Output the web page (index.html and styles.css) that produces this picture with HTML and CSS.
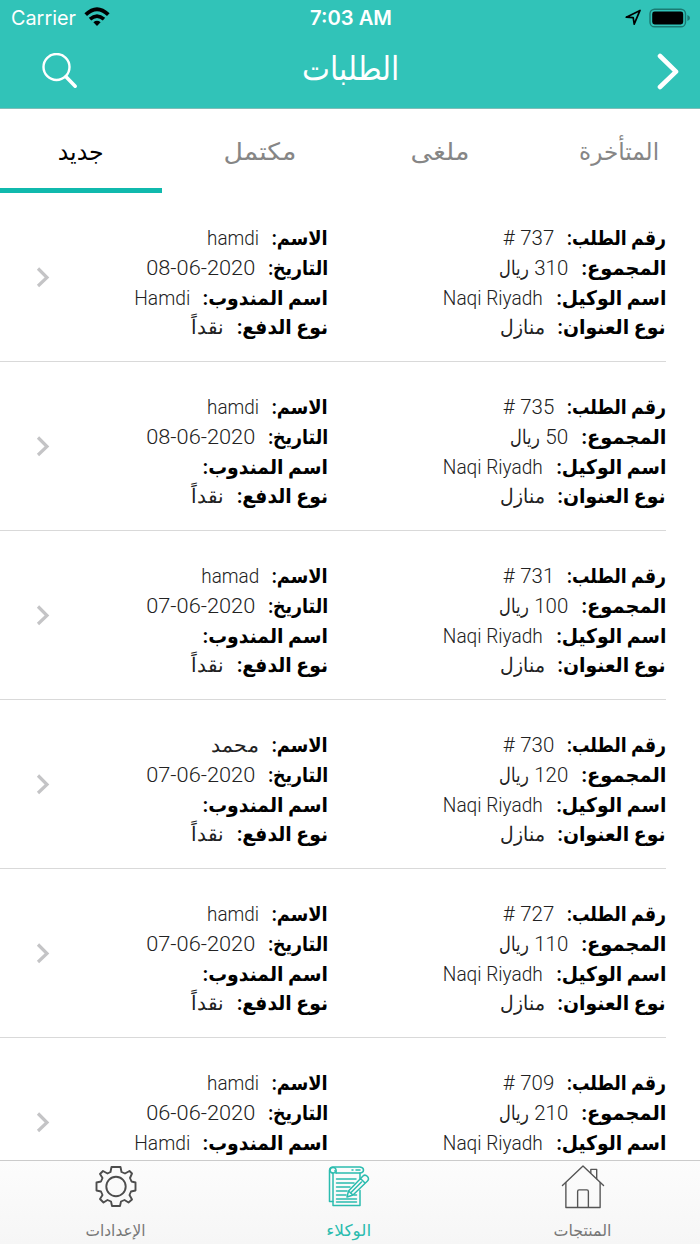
FILE: index.html
```html
<!DOCTYPE html>
<html lang="ar" dir="rtl">
<head>
  <meta charset="UTF-8" />
  <meta name="viewport" content="width=device-width, initial-scale=1.0"/>
  <title>الطلبات</title>
  <link rel="stylesheet" href="styles.css">
</head>
<body>
  <div class="app">

    <!-- Header -->
    <header class="header">
      <div class="status" dir="ltr">
        <div class="status-side">
          <span class="carrier"><span class="fit" data-width="65">Carrier</span></span>
          <svg class="wifi" width="26" height="20" viewBox="0 0 26 20">
            <path d="M1.7 7.6Q13-3.2 24.3 7.6" fill="none" stroke="#000" stroke-width="3.8"/>
            <path d="M6 12.2Q13 6 20 12.2" fill="none" stroke="#000" stroke-width="3.6"/>
            <path d="M9.4 15.2Q13 12.4 16.6 15.2L13 19Z"/>
          </svg>
        </div>
        <span class="time"><span class="fit" data-width="82">7:03 AM</span></span>
        <div class="status-side end">
          <svg width="17" height="17" viewBox="0 0 17 17">
            <path d="M1.3 8.2L15 1.4L9.2 15.2L8.2 8.7Z" fill="none" stroke="#000" stroke-width="1.7" stroke-linejoin="round"/>
          </svg>
          <svg width="41" height="20" viewBox="0 0 41 20">
            <rect x="1" y="1.2" width="35.5" height="17.6" rx="4.6" fill="none" stroke="#1a7a72" stroke-width="1.4"/>
            <rect x="3.2" y="3.6" width="31" height="12.8" rx="2.4"/>
            <path d="M38.4 7Q41 8 41 10T38.4 13Z" fill="#1a7a72"/>
          </svg>
        </div>
      </div>
      <div class="nav" dir="ltr">
        <div class="nav-side">
          <svg width="36" height="37" viewBox="0 0 36 37" fill="none" stroke="#fff" stroke-linecap="round">
            <circle cx="14.5" cy="14" r="13" stroke-width="2.4"/>
            <path d="M24 23.8L33.2 33.2" stroke-width="3.6"/>
          </svg>
        </div>
        <h1 class="title" dir="rtl"><span class="fit" data-width="97">الطلبات</span></h1>
        <div class="nav-side end">
          <svg width="22" height="37" viewBox="0 0 22 37">
            <path d="M3 3L19 18.700L3 34" fill="none" stroke="#fff" stroke-width="4.600" stroke-linecap="round" stroke-linejoin="round"/>
          </svg>
        </div>
      </div>
    </header>

    <!-- Tabs -->
    <nav class="tabs">
      <a class="tab"><span class="fit" data-width="80">المتأخرة</span></a>
      <a class="tab"><span class="fit" data-width="59">ملغى</span></a>
      <a class="tab"><span class="fit" data-width="73">مكتمل</span></a>
      <a class="tab active"><span class="fit" data-width="46">جديد</span></a>
    </nav>

    <!-- Orders -->
    <main class="orders" id="orders"></main>

    <!-- Bottom bar -->
    <footer class="tabbar">
      <a class="tabbar-item">
        <svg width="46" height="46" viewBox="0 0 46 46" fill="none" stroke="#555" stroke-width="1.4" stroke-linecap="round" stroke-linejoin="round">
          <path d="M2 22L23 2L44 22"/>
          <path d="M5.5 19V44.5H40.5V19"/>
          <path d="M31 9V5.5H37V15"/>
          <path d="M17.5 44V28Q17.5 26.5 19 26.5H27Q28.5 26.5 28.5 28V44"/>
        </svg>
        <span class="tabbar-label"><span class="fit" data-width="58">المنتجات</span></span>
      </a>
      <a class="tabbar-item active">
        <svg width="42" height="42" viewBox="0 0 42 42" fill="none" stroke="#2bbcaf" stroke-width="1.5" stroke-linecap="round" stroke-linejoin="round">
          <path d="M5 36H1.500V4.500Q2 1.500 5 1.500H32Q35.500 2 35.500 4.500T32.500 7.500H8"/>
          <path d="M8 7.500Q9 2 5 2Q2 2 2 5Q2.500 7.500 5 7.500V40H32V25"/>
          <path d="M5 7.500Q8 7.500 7 5M32 7.500V13M24 4.500H25M28 4.500H32"/>
          <path d="M8.500 13.500H28M8.500 17.500H26M8.500 21.500H22M8.500 25.500H19M8.500 29.500H18M8.500 33.500H28.500M26 29.500H28.500M8.500 36.500H28.500"/>
          <path d="M19 31.500L20.500 25.500L35 10.500Q37 8.500 39.500 11Q41.500 13.500 39.500 15.500L25 29.500ZM20.500 25.500L25 29.500M32.500 13L37 17.500M22.500 27.500L33.500 16.500" fill="#fafafa"/>
        </svg>
        <span class="tabbar-label"><span class="fit" data-width="45">الوكلاء</span></span>
      </a>
      <a class="tabbar-item">
        <svg width="42" height="42" viewBox="0 0 42 42" fill="none" stroke="#4d4d4d" stroke-width="1.900" stroke-linejoin="round">
          <path d="M16.500 1.500H25.500L26.500 6.500L30 8L34.500 5.500L37 8L35 12.500L36.500 16L40.500 17V25L36 26L34.500 29.500L37 34L33.500 37L29.500 34.500L26 36L25 40.500H17L16 36L12.500 34.500L8.500 37L5 33.500L7.500 29.500L6 26L1.500 25V17L6 16L7.500 12.500L5 8.500L8 5.500L12.500 8L15.500 6.500Z"/>
          <circle cx="21" cy="21" r="9.700"/>
        </svg>
        <span class="tabbar-label"><span class="fit" data-width="60">الإعدادات</span></span>
      </a>
    </footer>
  </div>

  <script src="script.js"></script>
</body>
</html>
```
FILE: styles.css
```css
* {
  box-sizing: border-box;
}

body {
  margin: 0;
  background: #fff;
  font-family: Roboto, "DejaVu Sans", sans-serif;
}

.app {
  width: 700px;
  height: 1244px;
  overflow: hidden;
  display: flex;
  flex-direction: column;
}

/* Text scaled to a set width */
.fit {
  display: inline-block;
  white-space: nowrap;
}

.header {
  height: 109px;
  flex: none;
  background: #31c3b8;
  border-bottom: 1px solid #7fbdb8;
  color: #fff;
}

.status {
  height: 35px;
  padding: 0 10px 0 11px;
  display: flex;
  align-items: center;
  font-family: Inter, sans-serif;
  font-size: 20px;
}

.status-side {
  flex: 1;
  display: flex;
  align-items: center;
  gap: 8px;
}

.status-side.end {
  justify-content: flex-end;
  gap: 7px;
}

.wifi {
  margin-bottom: 2px;
}

.time {
  font-weight: 600;
}

.nav {
  height: 73px;
  padding: 0 21px 0 42px;
  display: flex;
  align-items: center;
}

.nav-side {
  width: 260px;
  display: flex;
}

.nav-side.end {
  flex: 1;
  justify-content: flex-end;
}

.title {
  margin: 0 0 6px;
  font-size: 33px;
  font-weight: 200;
  line-height: 40px;
}

.tabs {
  height: 84px;
  flex: none;
  display: flex;
  justify-content: space-between;
}

.tab {
  width: 162px;
  height: 84px;
  padding-top: 25px;
  border-bottom: 5px solid transparent;
  text-align: center;
  font-size: 24px;
  line-height: 36px;
  color: #868686;
}

.tab.active {
  border-color: #10b9ad;
  color: #000;
}

.orders {
  flex: 1;
  min-height: 0;
  overflow: hidden;
}

.order {
  height: 169px;
  margin-right: 34px;
  padding-top: 30px;
  border-bottom: 1px solid #d9d9d9;
  display: flex;
}

.order-col {
  width: 338px;
}

.order-col + .order-col {
  width: 277px;
}

.field {
  height: 29.8px;
  display: flex;
  gap: 13px;
  font-size: 20px;
  line-height: 30px;
}

.field-label {
  font-weight: bold;
  color: #000;
}

.field-value {
  display: flex;
  gap: 5px;
  font-weight: 300;
  color: #222;
}

.order-arrow {
  margin-top: 42px;
}

.tabbar {
  height: 84px;
  flex: none;
  border-top: 1px solid #cbcbcb;
  background: linear-gradient(#fcfcfc, #f6f6f6);
  display: flex;
}

.tabbar-item {
  flex: 1;
  padding-top: 3px;
  display: flex;
  flex-direction: column;
  align-items: center;
  color: #777;
}

.tabbar-item svg {
  height: 46px;
}

.tabbar-item + .tabbar-item svg {
  margin-right: 2px;
}

.tabbar-item.active {
  color: #2bbcaf;
}

.tabbar-label {
  margin: 9px 0 0;
  padding-right: 2px;
  font-size: 16px;
  line-height: 26px;
}
```
FILE: script.js
```javascript
const orders = [
  { id: '737', total: '310', name: 'hamdi', date: '08-06-2020', rep: 'Hamdi', address: 'منازل', payment: 'نقداً' },
  { id: '735', total: '50', name: 'hamdi', date: '08-06-2020', rep: '', address: 'منازل', payment: 'نقداً' },
  { id: '731', total: '100', name: 'hamad', date: '07-06-2020', rep: '', address: 'منازل', payment: 'نقداً' },
  { id: '730', total: '120', name: 'محمد', date: '07-06-2020', rep: '', address: 'منازل', payment: 'نقداً' },
  { id: '727', total: '110', name: 'hamdi', date: '07-06-2020', rep: '', address: 'منازل', payment: 'نقداً' },
  { id: '709', total: '210', name: 'hamdi', date: '06-06-2020', rep: 'Hamdi' }
];

const nameWidths = { hamdi: 52, hamad: 58, 'محمد': 48 };

function fit(text, width) {
  return `<span class="fit" data-width="${width}">${text}</span>`;
}

function field(label, labelWidth, value) {
  return `
    <div class="field">
      <span class="field-label">${fit(label + ':', labelWidth)}</span>
      <span class="field-value">${value}</span>
    </div>`;
}

document.getElementById('orders').innerHTML = orders.map(o => `
  <div class="order">
    <div class="order-col">
      ${field('رقم الطلب', 99, fit(o.id, 34) + fit('#', 12))}
      ${field('المجموع', 85, fit(o.total, o.total.length > 2 ? 34 : 23) + fit('ريال', 30))}
      ${field('اسم الوكيل', 110, fit('Naqi Riyadh', 100))}
      ${o.address ? field('نوع العنوان', 108, fit(o.address, 45)) : ''}
    </div>
    <div class="order-col">
      ${field('الاسم', 56, fit(o.name, nameWidths[o.name]))}
      ${field('التاريخ', 60, fit(o.date, 109))}
      ${field('اسم المندوب', 125, o.rep ? fit(o.rep, 56) : '')}
      ${o.payment ? field('نوع الدفع', 91, fit(o.payment, 33)) : ''}
    </div>
    <svg class="order-arrow" width="16" height="24" viewBox="0 0 16 24">
      <path d="M3 3.500L12 12.500L3 21" fill="none" stroke="#c4c4c6" stroke-width="3.200"/>
    </svg>
  </div>`).join('');

// Scale each text horizontally to its width
document.querySelectorAll('.fit').forEach(el => {
  const width = Number(el.dataset.width);
  const natural = el.getBoundingClientRect().width;
  const rtl = getComputedStyle(el).direction === 'rtl';
  el.style.transformOrigin = rtl ? 'right center' : 'left center';
  el.style.transform = `scaleX(${width / natural})`;
  if (rtl) {
    el.style.marginLeft = (width - natural) + 'px';
  } else {
    el.style.marginRight = (width - natural) + 'px';
  }
});
```
